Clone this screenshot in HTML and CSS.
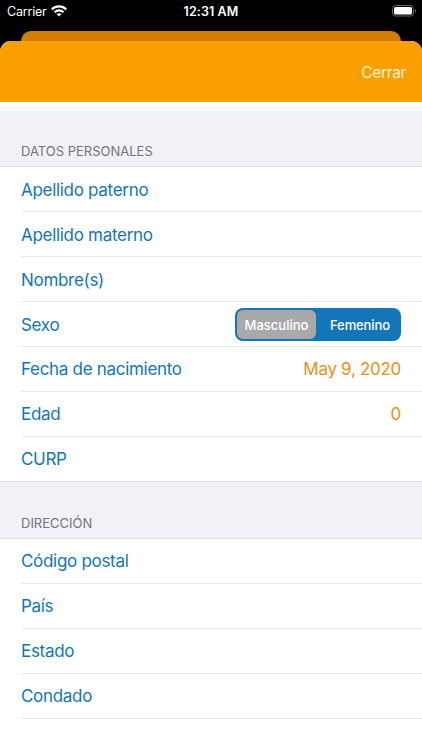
FILE: index.html
```html
<!DOCTYPE html>
<html lang="es">
<head>
    <meta charset="UTF-8">
    <meta name="viewport" content="width=device-width, initial-scale=1.0">
    <title>Datos personales</title>
    <link rel="stylesheet" href="styles.css">
</head>
<body>
    <div class="status-bar">
        <div class="carrier">
            <span>Carrier</span>
            <svg class="wifi" width="16" height="12" viewBox="0 0 16 12" fill="none" stroke="#fff" stroke-width="2.1">
                <path d="M.8 4.4C4.8 .4 11.2 .4 15.2 4.4"/>
                <path d="M3.5 7.2C6 4.8 10 4.8 12.5 7.2"/>
                <path d="M8 11.6L5.5 9.1C7 7.8 9 7.8 10.5 9.1Z" fill="#fff" stroke="none"/>
            </svg>
        </div>
        <span class="time">12:31 AM</span>
        <svg class="battery" width="25" height="12" viewBox="0 0 25 12">
            <rect x=".5" y=".5" width="21" height="10.5" rx="3" fill="none" stroke="#666"/>
            <rect x="2" y="2" width="18" height="7.5" rx="1.6" fill="#fff"/>
            <path d="M23 4C24.5 4.5 24.5 7 23 7.5Z" fill="#666"/>
        </svg>
    </div>
    <div class="back-card"></div>
    <div class="sheet">
        <div class="navbar">
            <button type="button" class="close">Cerrar</button>
        </div>
        <h2 class="first">DATOS PERSONALES</h2>
        <ul>
            <li class="field"><span class="label">Apellido paterno</span></li>
            <li class="field"><span class="label">Apellido materno</span></li>
            <li class="field"><span class="label">Nombre(s)</span></li>
            <li class="field">
                <span class="label">Sexo</span>
                <div class="segmented">
                    <button type="button" class="selected">Masculino</button>
                    <button type="button">Femenino</button>
                </div>
            </li>
            <li><span class="label">Fecha de nacimiento</span><span class="value">May 9, 2020</span></li>
            <li><span class="label">Edad</span><span class="value">0</span></li>
            <li class="last"><span class="label">CURP</span></li>
        </ul>
        <h2>DIRECCIÓN</h2>
        <ul>
            <li><span class="label">Código postal</span></li>
            <li><span class="label">País</span></li>
            <li><span class="label">Estado</span></li>
            <li><span class="label">Condado</span></li>
        </ul>
    </div>
</body>
</html>
```
FILE: styles.css
```css
* {
    box-sizing: border-box;
}
body {
    margin: 0;
    height: 750px;
    overflow: hidden;
    background: #000;
    font-family: Inter, "Liberation Sans", sans-serif;
}
button {
    border: none;
    padding: 0;
    background: none;
    color: white;
    font-family: inherit;
}
.status-bar {
    display: grid;
    grid-template-columns: 1fr auto 1fr;
    height: 31px;
    padding: 0 5px 9px 7px;
    align-items: center;
    color: white;
    font-size: 12.5px;
}
.carrier {
    display: flex;
    align-items: center;
    gap: 4px;
    letter-spacing: -0.2px;
}
.time {
    margin-right: 2px;
    font-weight: 600;
    letter-spacing: 0.1px;
}
.battery {
    justify-self: end;
}
.back-card {
    height: 10px;
    margin: 0 21px;
    border-radius: 10px 10px 0 0;
    background: #d57b00;
}
.sheet {
    height: 709px;
    border-radius: 11px 11px 0 0;
    overflow: hidden;
    background: white;
}
.navbar {
    display: flex;
    justify-content: flex-end;
    align-items: center;
    height: 61px;
    padding: 2px 16px 0 0;
    background: #fa9f00;
}
.close {
    font-size: 15.5px;
    letter-spacing: -0.35px;
    color: #fff4dc;
}
h2 {
    display: flex;
    align-items: flex-end;
    height: 57px;
    margin: 0;
    padding: 0 21px 7px;
    border-bottom: 1px solid #dedee2;
    background: #f2f1f7;
    color: #74747a;
    font-size: 13px;
    font-weight: 400;
    line-height: 16px;
}
.first {
    height: 56px;
    margin-top: 9px;
}
ul {
    margin: 0;
    padding: 0;
    list-style: none;
}
li {
    display: flex;
    justify-content: space-between;
    align-items: center;
    height: 45px;
    margin-left: 21px;
    padding-right: 21px;
    border-bottom: 1px solid #e9e9eb;
    font-size: 17px;
    letter-spacing: -0.3px;
}
.last {
    margin-left: 0;
    padding-left: 21px;
    border-color: #dedee2;
}
.field {
    padding-top: 1px;
}
.label {
    color: #1276b8;
}
.value {
    color: #ed8e13;
}
.segmented {
    display: flex;
    width: 166px;
    height: 33px;
    padding: 2px;
    border-radius: 8px;
    background: #1276b8;
}
.segmented button {
    flex: 1;
    padding-left: 5px;
    border-radius: 6px;
    font-size: 13px;
    font-weight: 500;
    letter-spacing: -0.1px;
}
.segmented .selected {
    flex: none;
    width: 79px;
    padding-left: 0;
    background: #a9a9ab;
    letter-spacing: 0;
}
```
